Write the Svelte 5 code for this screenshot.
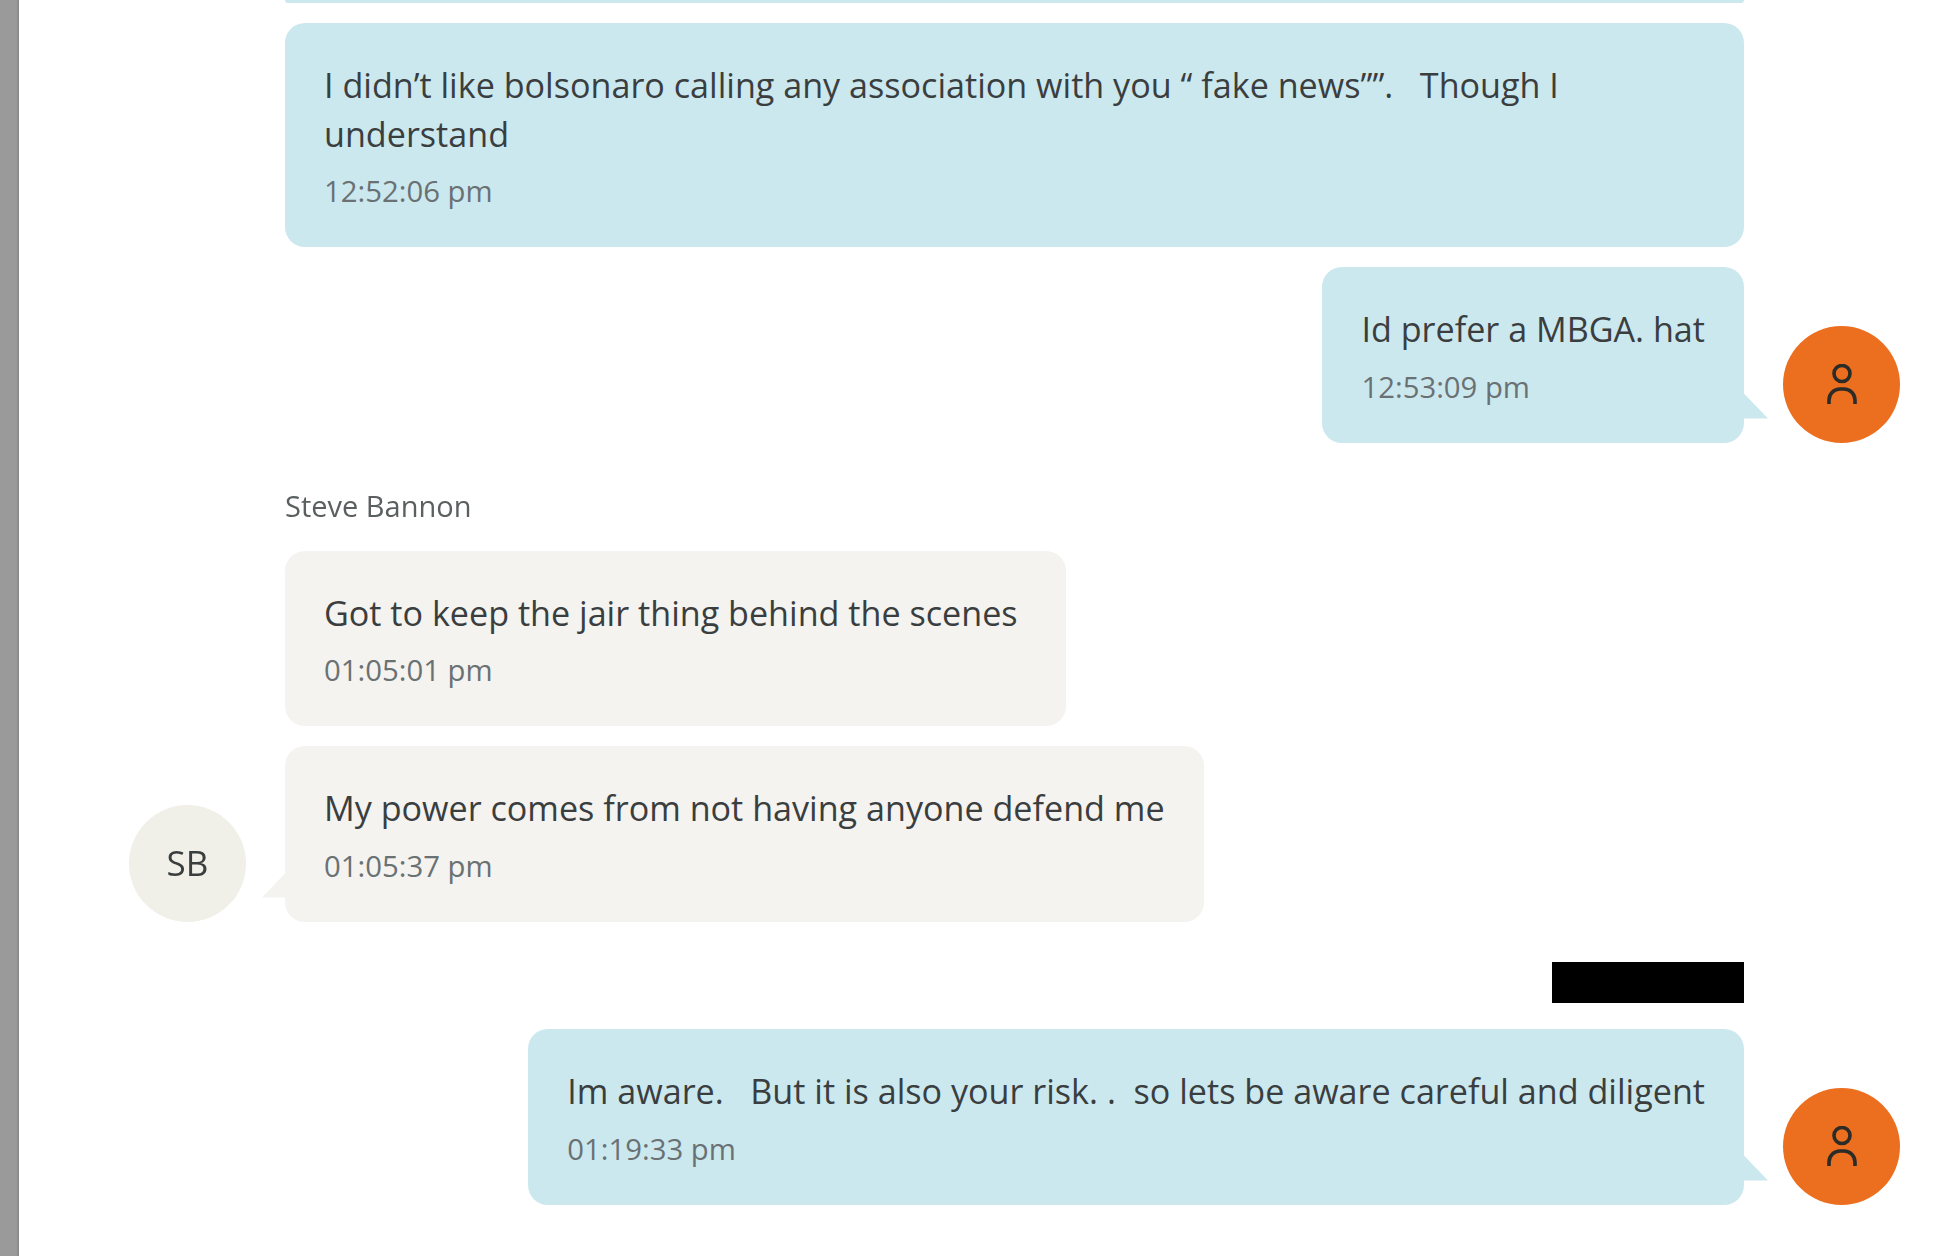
<script>
	// chat thread, newest at the bottom
	const groups = [
		{
			mine: true,
			messages: [
				{ text: 'I didn’t like bolsonaro calling any association with you “ fake news””.   Though I understand', time: '12:52:06 pm' },
				{ text: 'Id prefer a MBGA. hat', time: '12:53:09 pm' }
			]
		},
		{
			name: 'Steve Bannon',
			initials: 'SB',
			messages: [
				{ text: 'Got to keep the jair thing behind the scenes', time: '01:05:01 pm', roomy: true },
				{ text: 'My power comes from not having anyone defend me', time: '01:05:37 pm' }
			]
		},
		{
			mine: true,
			redacted: true,
			messages: [
				{ text: 'Im aware.   But it is also your risk. .  so lets be aware careful and diligent', time: '01:19:33 pm' }
			]
		},
		{ name: 'Steve Bannon', initials: 'SB', messages: [] }
	];
</script>

<div class="page">
	<div class="rail"></div>
	<div class="thread">
		<div class="scrolled-off"></div>
		{#each groups as group}
			<div class="group" class:mine={group.mine}>
				<div class="side">
					{#if group.initials && group.messages.length}
						<div class="avatar">{group.initials}</div>
					{/if}
				</div>
				<div class="messages">
					{#if group.name}
						<div class="name">{group.name}</div>
					{/if}
					{#if group.redacted}
						<div class="redacted"></div>
					{/if}
					{#each group.messages as msg, i}
						<div class="bubble" class:roomy={msg.roomy} class:tail={i === group.messages.length - 1}>
							<p>{msg.text}</p>
							<div class="time">{msg.time}</div>
						</div>
					{/each}
				</div>
				<div class="side">
					{#if group.mine}
						<div class="avatar me">
							<svg viewBox="0 0 30 40" width="30" height="40" fill="none" stroke="#2b2b28" stroke-width="3.6">
								<circle cx="15" cy="9.5" r="8" />
								<path d="M2 40 V36 A11 11 0 0 1 13 25 H17 A11 11 0 0 1 28 36 V40" />
							</svg>
						</div>
					{/if}
				</div>
			</div>
		{/each}
	</div>
</div>

<style>
	:global(body) {
		margin: 0;
		background: #fff;
	}

	.page {
		display: flex;
		height: 100vh;
		overflow: hidden;
		font-family: "Open Sans", "Noto Sans", sans-serif;
		color: #3a3e3f;
		filter: blur(0.6px);
	}

	.rail {
		flex: 0 0 19px;
		background: linear-gradient(to right, #9a9a9a 85%, #858585);
	}

	.thread {
		flex: 1;
		padding-left: 110px;
	}

	.scrolled-off {
		width: 1459px;
		height: 3px;
		margin-left: 156px;
		margin-bottom: 19.5px;
		background: #cce8ef;
		border-radius: 0 0 14px 14px;
	}

	.group {
		display: grid;
		grid-template-columns: 117px 1459px 117px;
		column-gap: 39px;
		margin-bottom: 48px;
	}

	.side {
		display: flex;
		align-items: flex-end;
	}

	.messages {
		display: flex;
		flex-direction: column;
		align-items: flex-start;
		gap: 20px;
	}

	.mine .messages {
		align-items: flex-end;
	}

	.name {
		font-size: 29px;
		line-height: 30px;
		color: #5a5f60;
		margin-bottom: 10px;
	}

	.redacted {
		width: 192px;
		height: 41px;
		background: #000;
		margin-top: -8px;
		margin-bottom: 6.5px;
	}

	.bubble {
		position: relative;
		padding: 38px 39px 36px;
		border-radius: 20px;
		background: #f4f3f0;
	}

	.bubble.roomy {
		padding-right: 48px;
	}

	.mine .bubble {
		background: #cce8ef;
	}

	.bubble.tail::after {
		content: "";
		position: absolute;
		left: -23px;
		bottom: 24px;
		width: 24px;
		height: 25px;
		background: inherit;
		clip-path: polygon(100% 0, 100% 100%, 0 100%);
	}

	.mine .bubble.tail::after {
		left: auto;
		right: -24px;
		clip-path: polygon(0 0, 100% 100%, 0 100%);
	}

	p {
		margin: 0;
		font-size: 34.13px;
		line-height: 49px;
		white-space: pre-wrap;
	}

	.time {
		margin-top: 13.5px;
		font-size: 29.3px;
		line-height: 39px;
		color: #6a7173;
	}

	.avatar {
		box-sizing: border-box;
		width: 117px;
		height: 117px;
		padding-bottom: 2px;
		border-radius: 50%;
		display: flex;
		align-items: center;
		justify-content: center;
		background: #f0f0e9;
		font-size: 35px;
	}

	.avatar.me {
		padding-bottom: 0;
		background: #ec6f20;
	}
</style>
